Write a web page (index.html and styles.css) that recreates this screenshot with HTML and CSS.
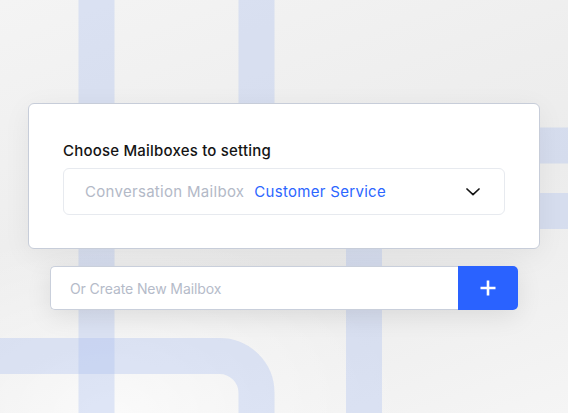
FILE: index.html
```html
<!DOCTYPE html>
<html>
<head>
<meta charset="utf-8">
<link rel="stylesheet" href="styles.css">
</head>
<body>
<div class="stage">
  <svg class="deco" width="568" height="413" viewBox="0 0 568 413" aria-hidden="true">
    <g fill="none" stroke="rgba(165,188,240,0.32)" stroke-width="36">
      <path d="M96.5 -10 V 430"/>
      <path d="M256.5 -10 V 160"/>
      <path d="M364 200 V 430"/>
      <path d="M420 145.5 H 580"/>
      <path d="M420 211 H 580"/>
      <path d="M-10 356 H 219.5 A 37 37 0 0 1 256.5 393 V 430"/>
    </g>
  </svg>
  <div class="content">
    <section class="card">
      <h2 class="title">Choose Mailboxes to setting</h2>
      <div class="select">
        <div class="select-text">
          <span class="label">Conversation Mailbox</span>
          <span class="value">Customer Service</span>
        </div>
        <svg class="chevron" width="14" height="8" viewBox="0 0 14 8"><path d="M1 1 L7 6.6 L13 1" fill="none" stroke="#151515" stroke-width="1.7" stroke-linecap="round" stroke-linejoin="round"/></svg>
      </div>
    </section>
    <div class="create">
      <div class="create-input">Or Create New Mailbox</div>
      <button class="create-btn" type="button">
        <svg width="16" height="16" viewBox="0 0 16 16"><path d="M8 0.5 V15.5 M0.5 8 H15.5" stroke="#fff" stroke-width="2.6"/></svg>
      </button>
    </div>
  </div>
</div>
</body>
</html>
```
FILE: styles.css
```css
* { box-sizing: border-box; }
html, body { margin: 0; padding: 0; }
body {
  font-family: Inter, "Noto Sans", sans-serif;
  width: 568px;
  height: 413px;
  overflow: hidden;
}
.stage {
  position: relative;
  width: 568px;
  height: 413px;
  background:
    radial-gradient(ellipse 420px 260px at 20% 100%, rgba(255,255,255,0.7), rgba(255,255,255,0) 70%),
    linear-gradient(160deg, #f4f4f4 0%, #eeeeee 40%, #ececec 60%, #f5f5f5 100%);
}
.deco {
  position: absolute;
  left: 0;
  top: 0;
}
.content {
  position: relative;
  padding: 103px 0 0 28px;
  display: flex;
  flex-direction: column;
}
.card {
  width: 512px;
  height: 146px;
  background: #fff;
  border: 1px solid #c7cdd9;
  border-radius: 6px;
  padding: 37px 34px 33px;
  box-shadow: 0 6px 28px rgba(0,0,0,0.06);
}
.title {
  margin: 0 0 8px;
  font-size: 15px;
  line-height: 19px;
  font-weight: 500;
  color: #141414;
  letter-spacing: 0.2px;
}
.select {
  height: 47px;
  border: 1px solid #e7eaef;
  border-radius: 6px;
  display: flex;
  align-items: center;
  justify-content: space-between;
  padding: 0 24px 0 21px;
}
.select-text {
  display: flex;
  gap: 10px;
  font-size: 15px;
  line-height: 18px;
  letter-spacing: 0.3px;
}
.label { color: #b3b9c7; }
.value { color: #2c66ff; }
.chevron { display: block; }
.create {
  margin: 17px 0 0 22px;
  width: 468px;
  height: 44px;
  display: flex;
  border-radius: 5px;
  box-shadow: 0 6px 26px rgba(0,0,0,0.09);
}
.create-input {
  flex: 1;
  border: 1px solid #c9cfdb;
  border-right: none;
  border-radius: 5px 0 0 5px;
  background: #fff;
  display: flex;
  align-items: center;
  padding-left: 19px;
  font-size: 14px;
  line-height: 17px;
  color: #b5bbc9;
  letter-spacing: -0.1px;
}
.create-btn {
  width: 60px;
  border: none;
  border-radius: 0 5px 5px 0;
  background: #2a62ff;
  display: flex;
  align-items: center;
  justify-content: center;
  padding: 0;
}
.create-btn svg { display: block; }
```
